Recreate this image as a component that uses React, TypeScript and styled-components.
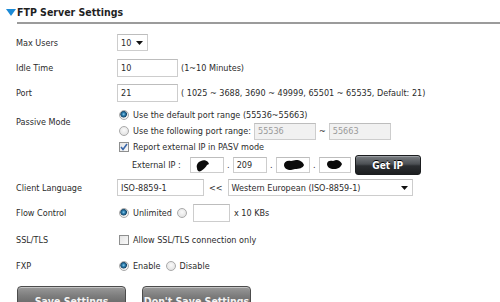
import React from "react";
import styled, { createGlobalStyle } from "styled-components";

const Global = createGlobalStyle`
  html, body { margin: 0; padding: 0; background: #fff; }
  body {
    font-family: "DejaVu Sans Condensed", "DejaVu Sans", "Liberation Sans", sans-serif;
    font-size: 9px;
    color: #2b2b2b;
    width: 500px;
    height: 302px;
    overflow: hidden;
  }
`;

const Page = styled.div`
  display: flex;
  flex-direction: column;
  width: 500px;
`;

const Header = styled.div`
  display: flex;
  align-items: flex-start;
  padding-left: 6px;
`;

const Triangle = styled.svg`
  width: 10px;
  height: 7px;
  margin-top: 9px;
  margin-right: 1px;
  flex: none;
`;

const Title = styled.div`
  flex: 1;
  font-weight: bold;
  font-size: 10.5px;
  line-height: 13px;
  color: #1f1f1f;
  padding: 6px 0 3px;
  border-bottom: 2px solid #9b9b9b;
`;

const Form = styled.div`
  display: flex;
  flex-direction: column;
  padding: 6px 0 0 16px;
`;

const Row = styled.div<{ $h: number; $top?: boolean }>`
  display: grid;
  grid-template-columns: 101px 1fr;
  align-items: ${(p) => (p.$top ? "start" : "center")};
  height: ${(p) => p.$h}px;
  padding-top: ${(p) => (p.$top ? 2 : 0)}px;
  box-sizing: border-box;
`;

const Label = styled.div<{ $pt?: number }>`
  padding-top: ${(p) => p.$pt || 0}px;
  line-height: 16px;
  white-space: nowrap;
`;

const Field = styled.div`
  display: flex;
  align-items: center;
  white-space: nowrap;
`;

const Stack = styled.div`
  display: flex;
  flex-direction: column;
`;

const Line = styled.div<{ $h?: number; $indent?: number }>`
  display: flex;
  align-items: center;
  height: ${(p) => p.$h || 16}px;
  padding-left: ${(p) => p.$indent || 0}px;
  white-space: nowrap;
`;

const TextBox = styled.div<{ $w: number; $h?: number; $disabled?: boolean }>`
  box-sizing: border-box;
  width: ${(p) => p.$w}px;
  height: ${(p) => p.$h || 18}px;
  border: 1px solid #cdcdcd;
  border-top-color: #bdbdbd;
  background: ${(p) => (p.$disabled ? "#f1f1f1" : "#fff")};
  color: ${(p) => (p.$disabled ? "#9a9a9a" : "#2b2b2b")};
  padding-left: 3px;
  display: flex;
  align-items: center;
  flex: none;
  overflow: hidden;
`;

const SelectBox = styled(TextBox)`
  justify-content: space-between;
  padding-right: 4px;
`;

const Arrow = styled.svg`
  width: 7px;
  height: 4px;
  flex: none;
`;

const Hint = styled.span<{ $ml?: number }>`
  margin-left: ${(p) => p.$ml ?? 3}px;
`;

const RadioDot = styled.span<{ $on?: boolean }>`
  box-sizing: border-box;
  width: 10px;
  height: 10px;
  border-radius: 50%;
  border: 1px solid #a9a9a9;
  background: ${(p) =>
    p.$on
      ? "radial-gradient(circle at 45% 40%, #8fd0f0 0, #2d7fb0 1.5px, #17486b 3px, #e8e8e8 3.6px, #f7f7f7 5px)"
      : "radial-gradient(circle at 50% 40%, #fafafa 0, #e2e2e2 5px)"};
  flex: none;
  margin-left: 2px;
  margin-right: 4px;
`;

const Check = styled.span`
  box-sizing: border-box;
  width: 10px;
  height: 10px;
  border: 1px solid #8e8f8f;
  background: linear-gradient(135deg, #e4e4e4, #fafafa);
  flex: none;
  margin-left: 2px;
  margin-right: 4px;
  display: flex;
  align-items: center;
  justify-content: center;
`;

const Dot = styled.span`
  width: 9px;
  text-align: center;
  flex: none;
`;

const Tilde = styled.span`
  margin: 0 3px;
`;

const GetIpButton = styled.div`
  box-sizing: border-box;
  margin-left: 4px;
  width: 66px;
  height: 20px;
  border-radius: 3px;
  border: 1px solid #1b1d1f;
  background: linear-gradient(#7a7e82 0%, #4b4f53 45%, #2b2e31 55%, #1c1e20 100%);
  color: #fff;
  font-weight: bold;
  font-size: 10px;
  display: flex;
  align-items: center;
  justify-content: center;
  text-shadow: 0 -1px 0 #000;
  box-shadow: inset 0 1px 0 #9a9ea2;
`;

const Sep = styled.span`
  margin: 0 4px 0 5px;
`;

const ButtonBar = styled.div`
  display: flex;
  gap: 16px;
  padding: 7px 0 0 17px;
`;

const BigButton = styled.div<{ $w: number }>`
  box-sizing: border-box;
  width: ${(p) => p.$w}px;
  height: 24px;
  border-radius: 4px;
  border: 1px solid #4c4c4c;
  background: linear-gradient(#9a9a9a 0%, #7d7d7d 40%, #5e5e5e 100%);
  box-shadow: inset 0 1px 0 #c4c4c4;
  color: #f4f4f4;
  font-weight: bold;
  font-size: 10.5px;
  line-height: 12px;
  display: flex;
  justify-content: center;
  padding-top: 8px;
`;

const Blob = ({ v }: { v: number }) => {
  const paths = [
    "M2 9 C1 6 3 3 6 2 C8 1 11 1 13 3 L14 5 L12 6 C11 8 9 10 6 12 C4 13 2 12 2 9 Z",
    "M1 6 C1 3 4 1 8 2 L13 1 C17 1 20 3 21 6 C20 9 16 10 12 10 L8 11 C4 11 1 9 1 6 Z",
    "M1 5 C1 2 4 1 7 2 L10 1 C13 1 15 3 16 5 C15 8 12 10 8 10 C4 10 1 8 1 5 Z",
  ];
  const w = [15, 22, 17][v];
  return (
    <svg width={w} height={13} viewBox={`0 0 ${w} 13`} style={{ flex: "none", marginLeft: v === 0 ? 1 : 3 }}>
      <path d={paths[v]} fill="#0b0b0b" />
    </svg>
  );
};

const DownArrow = () => (
  <Arrow viewBox="0 0 7 4">
    <path d="M0 0 H7 L3.5 4 Z" fill="#111" />
  </Arrow>
);

export default function App() {
  return (
    <>
      <Global />
      <Page>
        <Header>
          <Triangle viewBox="0 0 10 7">
            <path d="M0 0 H10 L5 7 Z" fill="#1c8ad6" />
          </Triangle>
          <Title>FTP Server Settings</Title>
        </Header>
        <Form>
          <Row $h={25}>
            <Label>Max Users</Label>
            <Field>
              <SelectBox $w={31} $h={17}>
                10
                <DownArrow />
              </SelectBox>
            </Field>
          </Row>
          <Row $h={25}>
            <Label>Idle Time</Label>
            <Field>
              <TextBox $w={61}>10</TextBox>
              <Hint>(1~10 Minutes)</Hint>
            </Field>
          </Row>
          <Row $h={25}>
            <Label>Port</Label>
            <Field>
              <TextBox $w={61}>21</TextBox>
              <Hint>( 1025 ~ 3688, 3690 ~ 49999, 65501 ~ 65535, Default: 21)</Hint>
            </Field>
          </Row>
          <Row $h={70} $top>
            <Label $pt={7}>Passive Mode</Label>
            <Stack>
              <Line>
                <RadioDot $on />
                Use the default port range (55536~55663)
              </Line>
              <Line>
                <RadioDot />
                Use the following port range:
                <Hint $ml={3} />
                <TextBox $w={62} $h={17} $disabled>
                  55536
                </TextBox>
                <Tilde>~</Tilde>
                <TextBox $w={62} $h={17} $disabled>
                  55663
                </TextBox>
              </Line>
              <Line>
                <Check>
                  <svg width="8" height="8" viewBox="0 0 8 8">
                    <path d="M1 4 L3 6.5 L7 1" stroke="#3a66a8" strokeWidth="1.6" fill="none" />
                  </svg>
                </Check>
                Report external IP in PASV mode
              </Line>
              <Line $h={20} $indent={15}>
                External IP :
                <Sep />
                <TextBox $w={34} $h={16}>
                  <Blob v={0} />
                </TextBox>
                <Dot>.</Dot>
                <TextBox $w={34} $h={16}>
                  209
                </TextBox>
                <Dot>.</Dot>
                <TextBox $w={34} $h={16}>
                  <Blob v={1} />
                </TextBox>
                <Dot>.</Dot>
                <TextBox $w={32} $h={16}>
                  <Blob v={2} />
                </TextBox>
                <GetIpButton>Get IP</GetIpButton>
              </Line>
            </Stack>
          </Row>
          <Row $h={25}>
            <Label>Client Language</Label>
            <Field>
              <TextBox $w={87} $h={17}>ISO-8859-1</TextBox>
              <Hint $ml={5}>&lt;&lt;</Hint>
              <Hint $ml={5} />
              <SelectBox $w={185} $h={17}>
                Western European (ISO-8859-1)
                <DownArrow />
              </SelectBox>
            </Field>
          </Row>
          <Row $h={26}>
            <Label>Flow Control</Label>
            <Field>
              <RadioDot $on />
              Unlimited
              <Hint $ml={3} />
              <RadioDot />
              <Hint $ml={2} />
              <TextBox $w={37}></TextBox>
              <Hint $ml={4}>x 10 KBs</Hint>
            </Field>
          </Row>
          <Row $h={27}>
            <Label>SSL/TLS</Label>
            <Field>
              <Check />
              Allow SSL/TLS connection only
            </Field>
          </Row>
          <Row $h={26}>
            <Label>FXP</Label>
            <Field>
              <RadioDot $on />
              Enable
              <Hint $ml={3} />
              <RadioDot />
              Disable
            </Field>
          </Row>
        </Form>
        <ButtonBar>
          <BigButton $w={109}>Save Settings</BigButton>
          <BigButton $w={109}>Don't Save Settings</BigButton>
        </ButtonBar>
      </Page>
    </>
  );
}
